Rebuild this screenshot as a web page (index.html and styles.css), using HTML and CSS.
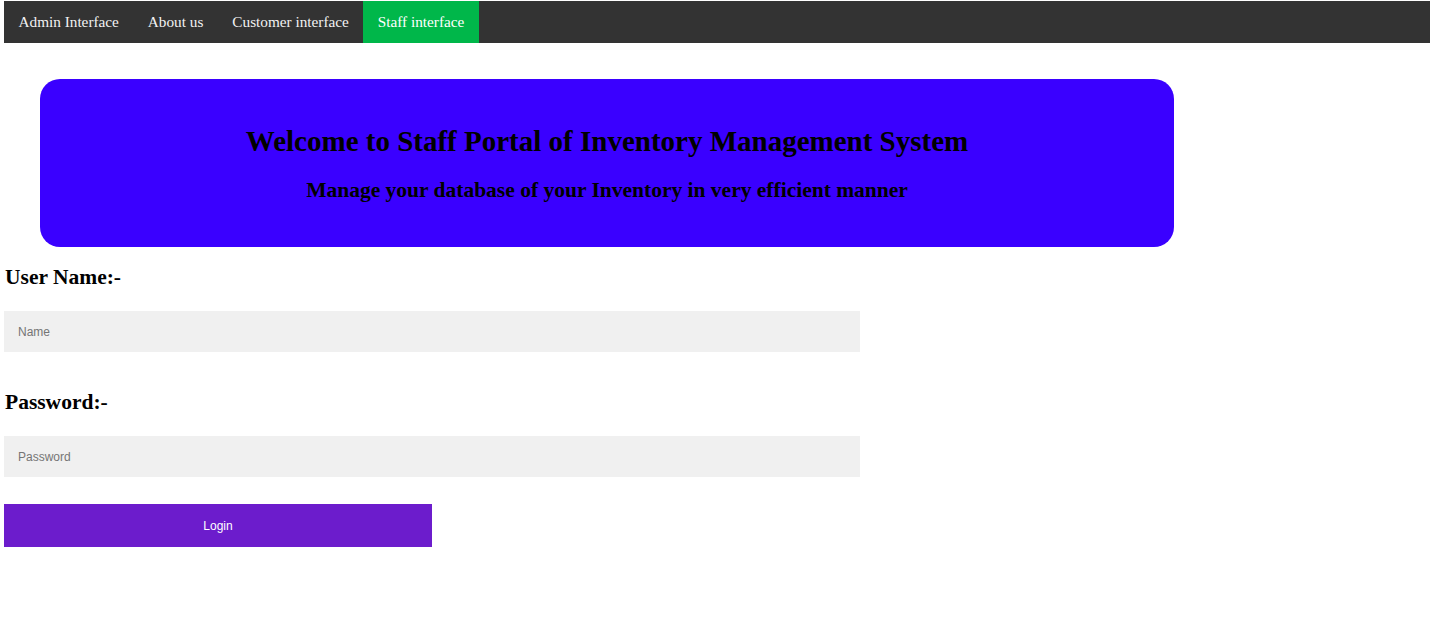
FILE: index.html
```html
<!DOCTYPE html>
<html lang="en">
<head>
<meta charset="utf-8">
<title>Staff Portal</title>
<link rel="stylesheet" href="styles.css">
</head>
<body>
<nav class="topnav">
  <a class="nav-link" href="#">Admin Interface</a>
  <a class="nav-link" href="#">About us</a>
  <a class="nav-link" href="#">Customer interface</a>
  <a class="nav-link active" href="#">Staff interface</a>
</nav>
<header class="banner">
  <h1 class="banner-title">Welcome to Staff Portal of Inventory Management System</h1>
  <h2 class="banner-sub">Manage your database of your Inventory in very efficient manner</h2>
</header>
<form class="login-form">
  <h3 class="field-label label-user">User Name:-</h3>
  <input class="field-input" type="text" placeholder="Name">
  <h3 class="field-label label-pass">Password:-</h3>
  <input class="field-input" type="password" placeholder="Password">
  <button class="login-btn" type="button">Login</button>
</form>
</body>
</html>
```
FILE: styles.css
```css
html, body {
  background: #ffffff;
}
body {
  margin: 1px 7px 0 4px;
  font-family: "Liberation Serif", "Times New Roman", serif;
  color: #000;
}
.topnav {
  display: flex;
  height: 42px;
  background: #333333;
}
.nav-link {
  display: flex;
  align-items: center;
  padding: 0 14.5px;
  font-size: 15.25px;
  color: #f2f2f2;
  text-decoration: none;
}
.nav-link.active {
  background: #00b74a;
  color: #ffffff;
}
.banner {
  box-sizing: border-box;
  width: 1134px;
  height: 168px;
  margin: 36px 0 0 36px;
  padding-top: 2px;
  background: #3a00ff;
  border-radius: 20px;
  display: flex;
  flex-direction: column;
  align-items: center;
  justify-content: center;
  gap: 18px;
}
.banner-title {
  margin: 0;
  font-size: 29px;
  line-height: 34px;
  font-weight: bold;
}
.banner-sub {
  margin: 0;
  font-size: 21.5px;
  line-height: 28px;
  font-weight: bold;
}
.login-form {
  display: flex;
  flex-direction: column;
  align-items: flex-start;
}
.field-label {
  margin: 0;
  padding-left: 1px;
  font-size: 21.5px;
  line-height: 26px;
  font-weight: bold;
}
.label-user {
  margin-top: 17px;
}
.label-pass {
  margin-top: 37px;
}
.field-input {
  box-sizing: border-box;
  width: 856px;
  height: 41px;
  margin-top: 21px;
  padding: 0 14px;
  border: none;
  background: #f0f0f0;
  font-family: "Liberation Sans", Arial, sans-serif;
  font-size: 12px;
  color: #333;
  outline: none;
}
.field-input::placeholder {
  color: #757575;
}
.login-btn {
  width: 428px;
  height: 43px;
  margin-top: 27px;
  border: none;
  background: #6c1ccc;
  color: #ffffff;
  font-family: "Liberation Sans", Arial, sans-serif;
  font-size: 12px;
  cursor: pointer;
}
```
